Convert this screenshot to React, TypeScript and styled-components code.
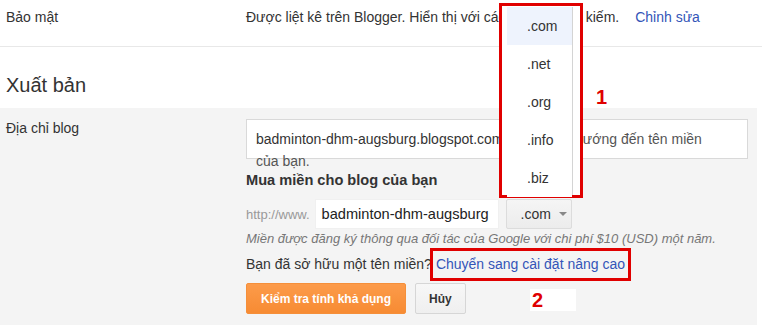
import React from 'react';
import styled, { createGlobalStyle } from 'styled-components';

const Global = createGlobalStyle`
    body {
        margin: 0;
        background: #fff;
        font-family: "Liberation Sans", Arial, sans-serif;
        color: #333;
        font-size: 14px;
    }
`;

const Page = styled.div`
    position: relative;
    width: 762px;
    height: 335px;
    overflow: hidden;
`;

const Row = styled.div<{ $gray?: boolean }>`
    display: grid;
    grid-template-columns: 246px 1fr;
    background: ${(p) => (p.$gray ? '#f4f4f4' : '#fff')};
`;

const TopRow = styled(Row)`
    height: 47px;
    align-items: start;
    padding-top: 9px;
    box-sizing: border-box;
    border-bottom: 1px solid #e8e8e8;
`;

const Label = styled.div`
    padding-left: 6px;
    line-height: 17px;
`;

const Text = styled.span`
    line-height: 17px;
`;

const Link = styled.a`
    color: #3355b8;
    text-decoration: none;
    cursor: pointer;
`;

const EditLink = styled(Link)`
    margin-left: 16px;
`;

const Heading = styled.h2`
    margin: 0;
    height: 61px;
    padding: 26px 0 0 6px;
    box-sizing: border-box;
    font-size: 20px;
    font-weight: normal;
    line-height: 24px;
    color: #333;
`;

const Section = styled(Row)`
    width: 757px;
    height: 217px;
    padding-top: 11px;
    box-sizing: border-box;
`;

const SectionLabel = styled(Label)`
    padding-top: 1px;
`;

const Content = styled.div`
    display: flex;
    flex-direction: column;
    align-items: flex-start;
`;

const UrlBox = styled.div`
    width: 502px;
    height: 40px;
    box-sizing: border-box;
    border: 1px solid #d9d9d9;
    background: #fff;
    padding: 8px 30px 0 9px;
    font-size: 14px;
    line-height: 22px;
    color: #333;
`;

const Faint = styled.span`
    color: #555;
`;

const BuyTitle = styled.div`
    margin-top: 12px;
    font-weight: bold;
    font-size: 14.6px;
    line-height: 18px;
    color: #333;
`;

const DomainRow = styled.div`
    display: flex;
    align-items: center;
    margin-top: 10px;
    height: 30px;
`;

const Prefix = styled.span`
    color: #999;
    font-size: 13px;
    margin-right: 5px;
`;

const DomainInput = styled.div`
    width: 184px;
    height: 30px;
    box-sizing: border-box;
    background: #fff;
    border: 1px solid #f0f0f0;
    padding: 0 0 0 6px;
    font-size: 14.6px;
    line-height: 28px;
    color: #222;
    white-space: nowrap;
    overflow: hidden;
`;

const SelectBtn = styled.div`
    display: flex;
    align-items: center;
    margin-left: 7px;
    width: 66px;
    height: 30px;
    box-sizing: border-box;
    padding-left: 14px;
    border: 1px solid #dcdcdc;
    border-radius: 2px;
    background: linear-gradient(#f5f5f5, #ececec);
    font-size: 14px;
    color: #333;
`;

const Caret = styled.span`
    margin-left: 8px;
    width: 0;
    height: 0;
    border-left: 4px solid transparent;
    border-right: 4px solid transparent;
    border-top: 4px solid #888;
`;

const Note = styled.div`
    margin-top: 2px;
    font-size: 13px;
    font-style: italic;
    color: #777;
    line-height: 16px;
`;

const OwnRow = styled.div`
    margin-top: 1px;
    display: flex;
    align-items: center;
    height: 33px;
    font-size: 14px;
`;

const MarkBox = styled.span`
    display: inline-block;
    border: 3px solid #e00000;
    padding: 0 3px;
    line-height: 27px;
    margin-left: -2px;
`;

const Buttons = styled.div`
    display: flex;
    gap: 9px;
    margin-top: 2px;
`;

const Button = styled.button<{ $primary?: boolean }>`
    height: 31px;
    padding: 0 ${(p) => (p.$primary ? '14px' : '13px')};
    border-radius: 2px;
    font-family: "Liberation Sans", Arial, sans-serif;
    font-size: 12px;
    font-weight: bold;
    cursor: pointer;
    border: 1px solid ${(p) => (p.$primary ? '#f58f3a' : '#d6d6d6')};
    background: ${(p) => (p.$primary ? 'linear-gradient(#fc9b4a, #f78b33)' : 'linear-gradient(#f7f7f7, #efefef)')};
    color: ${(p) => (p.$primary ? '#fff' : '#333')};
`;

const Dropdown = styled.div`
    position: absolute;
    left: 499px;
    top: 3px;
    width: 84px;
    height: 195px;
    box-sizing: border-box;
    border: 3px solid #e00000;
    background: #fff;
    padding: 1px 7px 0 5px;
`;

const Menu = styled.ul`
    list-style: none;
    margin: 0;
    padding: 0;
    height: 100%;
    border-right: 1px solid #d4d4d4;
    background: #fff;
`;

const Item = styled.li<{ $active?: boolean }>`
    height: 38px;
    line-height: 38px;
    padding-left: 20px;
    font-size: 14px;
    color: #333;
    background: ${(p) => (p.$active ? '#eef3fd' : '#fff')};
`;

const Marker = styled.div<{ $boxed?: boolean }>`
    position: absolute;
    font-size: 20px;
    font-weight: bold;
    color: #e00000;
    line-height: 22px;
    padding-left: 2px;
    background: ${(p) => (p.$boxed ? '#fff' : 'transparent')};
    width: ${(p) => (p.$boxed ? '44px' : 'auto')};
`;

const domains = ['.com', '.net', '.org', '.info', '.biz'];

export default function App() {
    return (
        <Page>
            <Global />
            <TopRow>
                <Label>Bảo mật</Label>
                <div>
                    <Text>Được liệt kê trên Blogger. Hiển thị với các công cụ tìm kiếm.</Text>
                    <EditLink>Chỉnh sửa</EditLink>
                </div>
            </TopRow>
            <Heading>Xuất bản</Heading>
            <Section $gray>
                <SectionLabel>Địa chỉ blog</SectionLabel>
                <Content>
                    <UrlBox>
                        badminton-dhm-augsburg.blogspot.com <Faint>sẽ chuyển hướng đến tên miền của bạn.</Faint>
                    </UrlBox>
                    <BuyTitle>Mua miền cho blog của bạn</BuyTitle>
                    <DomainRow>
                        <Prefix>http://www.</Prefix>
                        <DomainInput>badminton-dhm-augsburg</DomainInput>
                        <SelectBtn>
                            .com
                            <Caret />
                        </SelectBtn>
                    </DomainRow>
                    <Note>Miền được đăng ký thông qua đối tác của Google với chi phí $10 (USD) một năm.</Note>
                    <OwnRow>
                        <Text>Bạn đã sở hữu một tên miền?</Text>
                        <MarkBox>
                            <Link>Chuyển sang cài đặt nâng cao</Link>
                        </MarkBox>
                    </OwnRow>
                    <Buttons>
                        <Button $primary>Kiểm tra tính khả dụng</Button>
                        <Button>Hủy</Button>
                    </Buttons>
                </Content>
            </Section>
            <Dropdown>
                <Menu>
                    {domains.map((d, i) => (
                        <Item key={d} $active={i === 0}>
                            {d}
                        </Item>
                    ))}
                </Menu>
            </Dropdown>
            <Marker style={{ left: 594, top: 86 }}>1</Marker>
            <Marker $boxed style={{ left: 530, top: 289 }}>2</Marker>
        </Page>
    );
}
